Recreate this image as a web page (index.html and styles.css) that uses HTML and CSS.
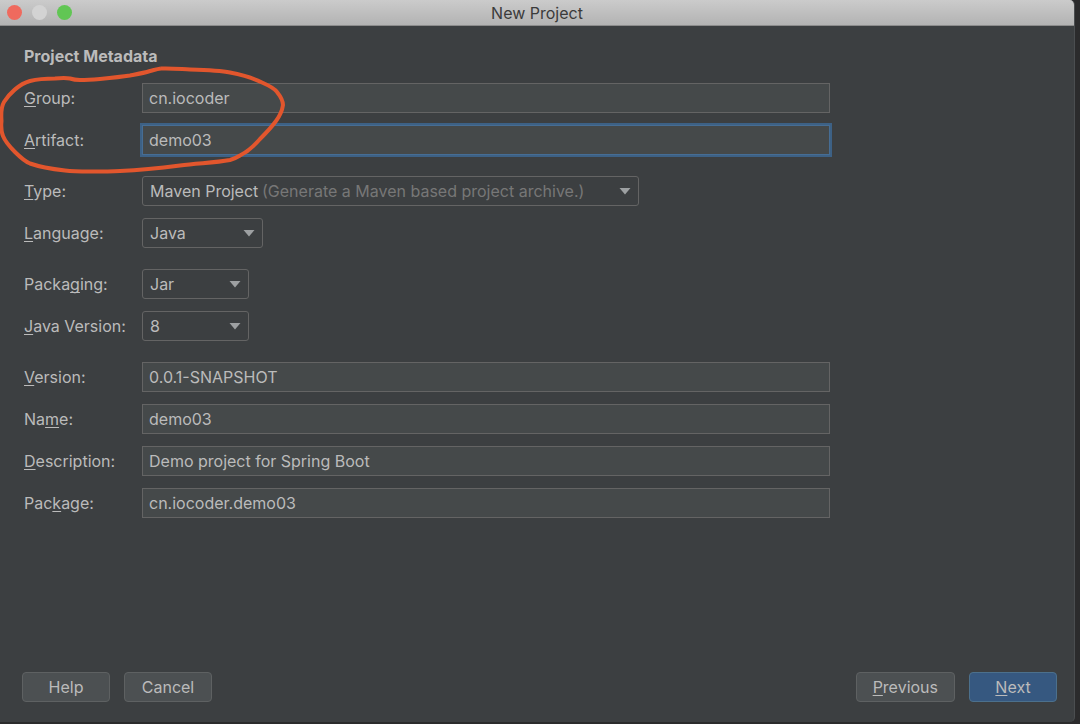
FILE: index.html
```html
<!DOCTYPE html>
<html lang="en">
<head>
<meta charset="UTF-8" />
<meta name="viewport" content="width=device-width, initial-scale=1" />
<title>New Project</title>
<link rel="stylesheet" href="styles.css">
</head>
<body>

  <div class="window">
    <header class="titlebar">
      <div class="lights">
        <span class="light close"></span>
        <span class="light minimize"></span>
        <span class="light maximize"></span>
      </div>
      <span class="title">New Project</span>
    </header>

    <form class="content">
      <h1>Project Metadata</h1>

      <div class="group">
        <div class="row">
          <label for="groupId"><u>G</u>roup:</label>
          <input type="text" id="groupId" value="cn.iocoder">
        </div>
        <div class="row">
          <label for="artifact"><u>A</u>rtifact:</label>
          <input type="text" id="artifact" class="active" value="demo03">
        </div>
      </div>

      <div class="group">
        <div class="row">
          <label for="type"><u>T</u>ype:</label>
          <div class="combo combo-wide">
            <select id="type"><option>Maven Project</option></select>
            <span class="hint">(Generate a Maven based project archive.)</span>
            <svg class="arrow" viewBox="0 0 12 8"><path d="M0.5 1h11L6 7.5z"/></svg>
          </div>
        </div>
        <div class="row">
          <label for="language"><u>L</u>anguage:</label>
          <div class="combo combo-medium">
            <select id="language"><option>Java</option></select>
            <svg class="arrow" viewBox="0 0 12 8"><path d="M0.5 1h11L6 7.5z"/></svg>
          </div>
        </div>
      </div>

      <div class="group">
        <div class="row">
          <label for="packaging">Packa<u>g</u>ing:</label>
          <div class="combo combo-small">
            <select id="packaging"><option>Jar</option></select>
            <svg class="arrow" viewBox="0 0 12 8"><path d="M0.5 1h11L6 7.5z"/></svg>
          </div>
        </div>
        <div class="row">
          <label for="javaVersion"><u>J</u>ava Version:</label>
          <div class="combo combo-small">
            <select id="javaVersion"><option>8</option></select>
            <svg class="arrow" viewBox="0 0 12 8"><path d="M0.5 1h11L6 7.5z"/></svg>
          </div>
        </div>
      </div>

      <div class="group">
        <div class="row">
          <label for="version"><u>V</u>ersion:</label>
          <input type="text" id="version" value="0.0.1-SNAPSHOT">
        </div>
        <div class="row">
          <label for="name">Na<u>m</u>e:</label>
          <input type="text" id="name" value="demo03">
        </div>
        <div class="row">
          <label for="description"><u>D</u>escription:</label>
          <input type="text" id="description" value="Demo project for Spring Boot">
        </div>
        <div class="row">
          <label for="package">Pac<u>k</u>age:</label>
          <input type="text" id="package" value="cn.iocoder.demo03">
        </div>
      </div>
    </form>

    <footer class="buttons">
      <button type="button">Help</button>
      <button type="button">Cancel</button>
      <button type="button" class="previous"><u>P</u>revious</button>
      <button type="button" class="primary"><u>N</u>ext</button>
    </footer>

    <!-- red marker around group and artifact -->
    <svg class="marker" width="290" height="180" viewBox="0 0 290 180">
      <path d="M161 68.5C171 68 180 69 190 69.500C206 70 220 70.500 230 72.500C243 75 253 78 262 82.500C270 86 275 89 277 92C281 97 283 101 283 105C282 112 279 117 276 121C271 128 266 133 260 139C254 146 247 152 240 155.500C236 158 234 159 230 160C214 163 197 163 180 165.500C160 168 140 170 120 171C110 171.500 100 171.500 90 171.500C81 171.500 73 171.500 65 170.500C52 169 40 167 30 163.500C24 161 19 156 15 152C10 147 5 141 3 136C1 131 1 126 1.500 121C1 114 1 107 4 102C9 94 19 84 30 81C38 79 46 78.500 55 78.500C60 78 65 77.500 70 78.500C73 79.500 76 80 80 80C87 80 94 79.500 100 79C110 78 120 77 130 75.500C138 74 144 73 150 71C154 70 157 69 161 68.500"/>
    </svg>
  </div>

</body>
</html>
```

FILE: styles.css
```css
* {
  box-sizing: border-box;
}
body {
  margin: 0;
  padding: 0 5px 2px 0;
  min-height: 100vh;
  display: flex;
  background: #2b2b2c;
  font-family: Inter, "Liberation Sans", sans-serif;
  font-size: 16px;
  line-height: 20px;
  color: #bbbbbb;
}
.window {
  position: relative;
  flex: 1;
  display: flex;
  flex-direction: column;
  background: #3c3f41;
  border-right: 1px solid #4b4e50;
  border-radius: 0 5px 5px 0;
  overflow: hidden;
}

/* title bar */
.titlebar {
  display: grid;
  grid-template-columns: 1fr auto 1fr;
  align-items: center;
  height: 26px;
  padding: 0 7px;
  background: linear-gradient(#cbcbcb, #b3b3b3);
  border-bottom: 1px solid #8c8c8c;
  color: #3b3b3b;
}
.lights {
  display: flex;
  gap: 10px;
}
.light {
  width: 15px;
  height: 15px;
  border-radius: 50%;
}
.close {
  background: #ef6a5e;
}
.minimize {
  background: #d3d3d3;
}
.maximize {
  background: #61c654;
}

/* form */
.content {
  flex: 1;
  padding: 20px 244px 20px 24px;
}
h1 {
  margin: 0 0 17px;
  font-size: 16px;
  line-height: 20px;
  font-weight: 700;
}
.group {
  display: grid;
  gap: 12px;
  margin-bottom: 21px;
}
.row {
  display: grid;
  grid-template-columns: 118px 1fr;
  align-items: center;
}
u {
  text-decoration-thickness: 1px;
  text-underline-offset: 2px;
  text-decoration-skip-ink: none;
}
input,
select,
button {
  height: 30px;
  margin: 0;
  font: inherit;
  color: inherit;
}
input {
  width: 100%;
  padding: 0 6px;
  background: #45494a;
  border: 1px solid #646464;
  border-radius: 0;
  outline: none;
}
input.active {
  border-color: #466d94;
  box-shadow: 0 0 0 2px #3d6185;
}
.combo {
  display: grid;
  grid-template-columns: 1fr auto;
  align-items: center;
}
.combo > * {
  grid-row: 1;
}
.combo-wide {
  width: 497px;
}
.combo-medium {
  width: 121px;
}
.combo-small {
  width: 107px;
}
select {
  grid-column: 1 / 3;
  width: 100%;
  padding: 0 7px;
  appearance: none;
  background: #3c3f41;
  border: 1px solid #646464;
  border-radius: 3px;
  outline: none;
}
.hint {
  grid-column: 1;
  padding-left: 120px;
  color: #777777;
  pointer-events: none;
}
.arrow {
  grid-column: 2;
  width: 12px;
  height: 8px;
  margin-right: 8px;
  fill: #9da0a2;
  pointer-events: none;
}

/* bottom buttons */
.buttons {
  display: flex;
  gap: 14px;
  padding: 0 17px 20px 22px;
}
button {
  min-width: 88px;
  padding: 0 16px;
  background: #4c5052;
  border: 1px solid #5e6162;
  border-radius: 4px;
}
.previous {
  margin-left: auto;
}
.primary {
  background: #365880;
  border-color: #4c708c;
}

.marker {
  position: absolute;
  top: 0;
  left: 0;
  pointer-events: none;
}
.marker path {
  fill: none;
  stroke: #e2562d;
  stroke-width: 4;
  stroke-linejoin: round;
}
```
